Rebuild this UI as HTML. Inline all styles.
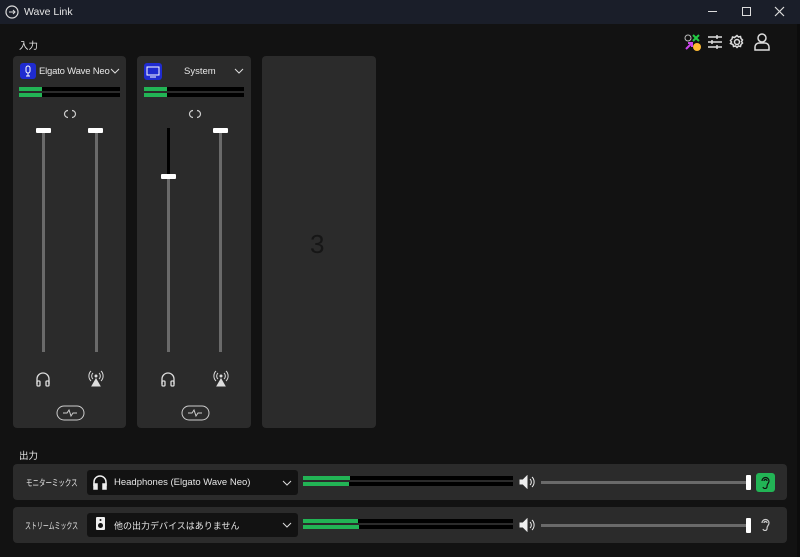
<!DOCTYPE html><html><head><meta charset="utf-8"><style>
*{margin:0;padding:0;box-sizing:border-box}
body{width:800px;height:557px;background:#0c0c0c;position:relative;overflow:hidden;font-family:"Liberation Sans","Noto Sans CJK JP",sans-serif;color:#e6e6e6}
.a{position:absolute}
.p{position:absolute;background:#2b2b2b;border-radius:4px}
.trk{position:absolute;width:3px;background:#6a6a6a}
.h{position:absolute;width:15px;height:5px;background:#fff;border-radius:1px}
.m{position:absolute;height:4px;background:#000}
.m i{display:block;height:100%;background:#22b455}
.t{font-size:10px;position:absolute;white-space:nowrap}
</style></head><body>
<div class="a" style="left:0;top:0;width:800px;height:24px;background:#1a1e29"></div>
<div class="a" style="left:0;top:24px;width:797px;height:533px;background:#121212"></div>
<svg class="a" style="left:5px;top:5px" width="14" height="14"><circle cx="7" cy="7" r="6" fill="none" stroke="#ddd" stroke-width="1.2"/><path d="M4 7h6M8 5l2 2-2 2" stroke="#ddd" fill="none"/></svg>
<div class="t" style="left:24px;top:6px;font-size:10.5px">Wave Link</div>
<div class="a" style="left:708px;top:11px;width:9px;height:1px;background:#ddd"></div>
<div class="a" style="left:742px;top:7px;width:9px;height:9px;border:1px solid #ddd"></div>
<svg class="a" style="left:774px;top:6px" width="11" height="11" stroke="#ddd" stroke-width="1.2"><path d="M1 1l9 9M10 1l-9 9"/></svg>
<div class="t" style="left:19px;top:38px;font-size:9.5px">入力</div>
<svg class="a" style="left:684px;top:34px" width="18" height="18"><circle cx="4" cy="4" r="3" fill="none" stroke="#bbb"/><path d="M9 1l6 6M15 1l-6 6" stroke="#2c4" stroke-width="2"/><path d="M2 15l6-6M4 9h4v4" stroke="#c4e" stroke-width="2" fill="none"/><circle cx="13" cy="13" r="4" fill="#fb3"/></svg>
<svg class="a" style="left:707px;top:34px" width="16" height="16" stroke="#ddd" stroke-width="1.5" fill="none"><path d="M1 3h14M1 8h14M1 13h14M10 1v4M5 6v4M10 11v4"/></svg>
<svg class="a" style="left:729px;top:34px" width="16" height="16" stroke="#ddd" stroke-width="1.5" fill="none"><circle cx="8" cy="8" r="2.5"/><path d="M8 1.5l1.5 1.5 2-.5.5 2 1.5 1.5-1 1.5 1 1.5-1.5 1.5-.5 2-2-.5-1.5 1.5-1.5-1.5-2 .5-.5-2L1.5 9.5 2.5 8 1.5 6.5 3 5l.5-2 2 .5z"/></svg>
<svg class="a" style="left:754px;top:33px" width="16" height="18" stroke="#ddd" stroke-width="1.5" fill="none"><circle cx="8" cy="5" r="4"/><path d="M1 17v-3a4 4 0 0 1 4-4h6a4 4 0 0 1 4 4v3z"/></svg>

<div class="p" style="left:13px;top:56px;width:113px;height:372px"></div>
<div class="p" style="left:137px;top:56px;width:114px;height:372px"></div>
<div class="p" style="left:262px;top:56px;width:114px;height:372px"></div>
<div class="t" style="left:310px;top:229px;font-size:26px;color:#161616">3</div>

<div class="a" style="left:20px;top:63px;width:16px;height:16px;background:#1f2bd0;border-radius:3px"></div>
<svg class="a" style="left:20px;top:63px" width="16" height="16" stroke="#fff" fill="none"><rect x="6" y="3" width="4" height="7" rx="2"/><path d="M8 10v3M6 13h4"/></svg>
<div class="t" style="left:39px;top:66px;font-size:9.5px;letter-spacing:-0.2px">Elgato Wave Neo</div>
<svg class="a" style="left:110px;top:68px" width="10" height="6"><path d="M1 1l4 4 4-4" stroke="#ddd" fill="none"/></svg>
<div class="a" style="left:144px;top:63px;width:18px;height:17px;background:#1f2bd0;border-radius:3px"></div>
<svg class="a" style="left:145px;top:64px" width="16" height="16" stroke="#fff" fill="none"><rect x="2" y="3" width="12" height="8"/><path d="M5 13h6"/></svg>
<div class="t" style="left:184px;top:66px;font-size:9.5px">System</div>
<svg class="a" style="left:234px;top:68px" width="10" height="6"><path d="M1 1l4 4 4-4" stroke="#ddd" fill="none"/></svg>

<div class="m" style="left:19px;top:87px;width:101px"><i style="width:23px"></i></div>
<div class="m" style="left:19px;top:93px;width:101px"><i style="width:23px"></i></div>
<div class="m" style="left:144px;top:87px;width:100px"><i style="width:23px"></i></div>
<div class="m" style="left:144px;top:93px;width:100px"><i style="width:23px"></i></div>
<svg class="a" style="left:63px;top:109px" width="14" height="10" stroke="#ccc" stroke-width="1.2" fill="none"><path d="M5 1.5a3.5 3.5 0 0 0 0 7M9 1.5a3.5 3.5 0 0 1 0 7"/></svg>
<svg class="a" style="left:188px;top:109px" width="14" height="10" stroke="#ccc" stroke-width="1.2" fill="none"><path d="M5 1.5a3.5 3.5 0 0 0 0 7M9 1.5a3.5 3.5 0 0 1 0 7"/></svg>

<div class="trk" style="left:42px;top:130px;height:222px"></div><div class="h" style="left:36px;top:128px"></div>
<div class="trk" style="left:95px;top:130px;height:222px"></div><div class="h" style="left:88px;top:128px"></div>
<div class="trk" style="left:167px;top:128px;height:224px"></div><div class="a" style="left:167px;top:128px;width:3px;height:48px;background:#000"></div><div class="h" style="left:161px;top:174px"></div>
<div class="trk" style="left:219px;top:130px;height:222px"></div><div class="h" style="left:213px;top:128px"></div>

<svg class="a" style="left:35px;top:371px" width="16" height="16" stroke="#ddd" stroke-width="1.3" fill="none"><path d="M2 13V8a6 6 0 0 1 12 0v5"/><rect x="2" y="10" width="3" height="5" rx="1"/><rect x="11" y="10" width="3" height="5" rx="1"/></svg>
<svg class="a" style="left:160px;top:371px" width="16" height="16" stroke="#ddd" stroke-width="1.3" fill="none"><path d="M2 13V8a6 6 0 0 1 12 0v5"/><rect x="2" y="10" width="3" height="5" rx="1"/><rect x="11" y="10" width="3" height="5" rx="1"/></svg>
<svg class="a" style="left:87px;top:370px" width="18" height="18" stroke="#ddd" fill="none"><circle cx="9" cy="6" r="1" fill="#ddd"/><path d="M6 3a4 4 0 0 0 0 6M12 3a4 4 0 0 1 0 6M4 1a7 7 0 0 0 0 10M14 1a7 7 0 0 1 0 10"/><path d="M9 9l4 7H5z" fill="#ddd"/></svg>
<svg class="a" style="left:212px;top:370px" width="18" height="18" stroke="#ddd" fill="none"><circle cx="9" cy="6" r="1" fill="#ddd"/><path d="M6 3a4 4 0 0 0 0 6M12 3a4 4 0 0 1 0 6M4 1a7 7 0 0 0 0 10M14 1a7 7 0 0 1 0 10"/><path d="M9 9l4 7H5z" fill="#ddd"/></svg>
<svg class="a" style="left:56px;top:405px" width="29" height="16" stroke="#ccc" fill="none"><rect x="1" y="1" width="27" height="14" rx="7"/><path d="M7 8h4l2-3 2 6 2-3h4"/></svg>
<svg class="a" style="left:181px;top:405px" width="29" height="16" stroke="#ccc" fill="none"><rect x="1" y="1" width="27" height="14" rx="7"/><path d="M7 8h4l2-3 2 6 2-3h4"/></svg>

<div class="t" style="left:19px;top:448px;font-size:9.5px">出力</div>
<div class="p" style="left:13px;top:464px;width:774px;height:36px"></div>
<div class="p" style="left:13px;top:507px;width:774px;height:36px"></div>
<div class="t" style="left:26px;top:476px;font-size:9px;transform:scaleX(0.72);transform-origin:0 0">モニターミックス</div>
<div class="t" style="left:25px;top:519px;font-size:9px;transform:scaleX(0.66);transform-origin:0 0">ストリームミックス</div>
<div class="a" style="left:87px;top:470px;width:211px;height:25px;background:#121212;border-radius:3px"></div>
<div class="a" style="left:87px;top:513px;width:211px;height:24px;background:#121212;border-radius:3px"></div>
<svg class="a" style="left:92px;top:474px" width="16" height="16" stroke="#eee" stroke-width="1.5" fill="none"><path d="M2 12V8a6 6 0 0 1 12 0v4"/><rect x="2" y="10" width="3" height="5" fill="#eee"/><rect x="11" y="10" width="3" height="5" fill="#eee"/></svg>
<div class="t" style="left:114px;top:477px;font-size:9.5px">Headphones (Elgato Wave Neo)</div>
<svg class="a" style="left:96px;top:517px" width="10" height="14"><rect x="0" y="0" width="9" height="13" rx="1" fill="#eee"/><circle cx="4.5" cy="8.5" r="2.5" fill="#121212"/><circle cx="4.5" cy="3" r="1" fill="#121212"/></svg>
<div class="t" style="left:114px;top:519px;font-size:9px">他の出力デバイスはありません</div>
<svg class="a" style="left:282px;top:480px" width="10" height="6"><path d="M1 1l4 4 4-4" stroke="#ddd" fill="none"/></svg>
<svg class="a" style="left:282px;top:522px" width="10" height="6"><path d="M1 1l4 4 4-4" stroke="#ddd" fill="none"/></svg>
<div class="m" style="left:303px;top:476px;width:210px"><i style="width:47px"></i></div>
<div class="m" style="left:303px;top:482px;width:210px"><i style="width:46px"></i></div>
<div class="m" style="left:303px;top:519px;width:210px"><i style="width:55px"></i></div>
<div class="m" style="left:303px;top:525px;width:210px"><i style="width:56px"></i></div>
<svg class="a" style="left:519px;top:475px" width="18" height="14" fill="#eee" stroke="#eee"><path d="M1 5h3l4-4v12l-4-4H1z"/><path d="M11 4a4 4 0 0 1 0 6M13 2a7 7 0 0 1 0 10" fill="none"/></svg>
<svg class="a" style="left:519px;top:518px" width="18" height="14" fill="#eee" stroke="#eee"><path d="M1 5h3l4-4v12l-4-4H1z"/><path d="M11 4a4 4 0 0 1 0 6M13 2a7 7 0 0 1 0 10" fill="none"/></svg>
<div class="a" style="left:541px;top:481px;width:208px;height:3px;background:#6a6a6a"></div>
<div class="a" style="left:746px;top:475px;width:5px;height:15px;background:#fff;border-radius:1px"></div>
<div class="a" style="left:541px;top:524px;width:208px;height:3px;background:#6a6a6a"></div>
<div class="a" style="left:746px;top:518px;width:5px;height:15px;background:#fff;border-radius:1px"></div>
<div class="a" style="left:756px;top:473px;width:19px;height:19px;background:#22b455;border-radius:3px"></div>
<svg class="a" style="left:759px;top:476px" width="13" height="13" stroke="#111" stroke-width="1.2" fill="none"><path d="M3 5a3.5 3.5 0 0 1 7 0c0 2-2 3-2 5a2 2 0 0 1-4 1M5 5a1.5 1.5 0 0 1 3 0"/></svg>
<svg class="a" style="left:759px;top:518px" width="13" height="13" stroke="#ccc" stroke-width="1.2" fill="none"><path d="M3 5a3.5 3.5 0 0 1 7 0c0 2-2 3-2 5a2 2 0 0 1-4 1M5 5a1.5 1.5 0 0 1 3 0"/></svg>
</body></html>
